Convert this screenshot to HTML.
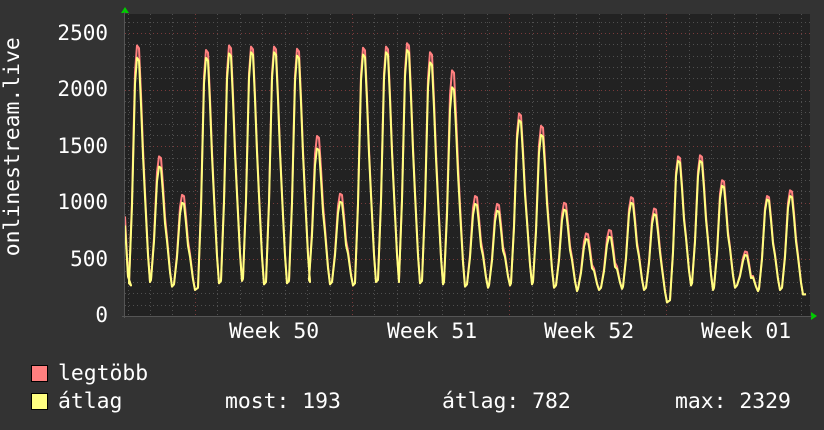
<!DOCTYPE html>
<html><head><meta charset="utf-8"><style>
html,body{margin:0;padding:0;background:#333;}
body{width:824px;height:430px;overflow:hidden;position:relative;font-family:"DejaVu Sans Mono","Liberation Mono",monospace;color:#fff;}
.t{position:absolute;font-size:21.4px;line-height:1;white-space:pre;}
.yl{position:absolute;right:716px;font-size:21px;line-height:1;}
.sq{position:absolute;width:15px;height:15px;border:1px solid #000;}
</style></head><body>
<svg id="g" width="824" height="430" style="position:absolute;left:0;top:0">
<rect x="125" y="14" width="685" height="302" fill="#222"/>
<g id="grid"></g>
<path id="mx" fill="none" stroke="#ff7f7f" stroke-width="2" stroke-linejoin="round"/>
<path id="av" fill="none" stroke="#ffff80" stroke-width="2" stroke-linejoin="round"/>
<polygon points="121,13 125,7 129,13" fill="#0c0"/>
<polygon points="811,312 817,316 811,320" fill="#0c0"/>
<line x1="124.5" y1="12" x2="124.5" y2="318" stroke="#555" stroke-width="1"/>
<line x1="122" y1="316.5" x2="812" y2="316.5" stroke="#555" stroke-width="1"/>
</svg>
<div class="yl" style="top:23px">2500</div>
<div class="yl" style="top:79px">2000</div>
<div class="yl" style="top:136px">1500</div>
<div class="yl" style="top:192px">1000</div>
<div class="yl" style="top:249px">500</div>
<div class="yl" style="top:305px">0</div>
<div class="t" style="left:-80px;top:153px;transform:rotate(-90deg);width:185px;text-align:center">onlinestream.live</div>
<div class="t" style="left:229px;top:321px">Week 50</div>
<div class="t" style="left:387px;top:321px">Week 51</div>
<div class="t" style="left:544px;top:321px">Week 52</div>
<div class="t" style="left:701px;top:321px">Week 01</div>
<div class="sq" style="left:31px;top:365px;background:#ff7f7f"></div>
<div class="sq" style="left:31px;top:393px;background:#ffff80"></div>
<div class="t" style="left:58px;top:363px">legtöbb</div>
<div class="t" style="left:58px;top:391px">átlag</div>
<div class="t" style="left:225px;top:391px">most: 193</div>
<div class="t" style="left:442px;top:391px">átlag: 782</div>
<div class="t" style="left:675px;top:391px">max: 2329</div>
<script>
var ns="http://www.w3.org/2000/svg",G=document.getElementById('grid');
function ln(x1,y1,x2,y2,c){var l=document.createElementNS(ns,'line');l.setAttribute('x1',x1);l.setAttribute('y1',y1);l.setAttribute('x2',x2);l.setAttribute('y2',y2);l.setAttribute('stroke',c);l.setAttribute('stroke-dasharray','1,3');l.setAttribute('stroke-width','1');G.appendChild(l);}
function Y(v){return 316-v*0.1132;}
for(var v=100;v<=2600;v+=100){var y=Math.round(Y(v))+0.5;if(y<14)break;ln(125,y,810,y,v%500==0?'#7a3a3a':'#505050');}
for(var x=127.5;x<810;x+=22.45){var xx=Math.round(x)+0.5;ln(xx,14,xx,316,'#505050');}
[195,352,509,666].forEach(function(x){ln(x+0.5,14,x+0.5,316,'#7a3a3a');});
var pk=[[138,2390,2280],[160,1410,1320],[183,1070,1000],[207,2350,2280],[230,2390,2320],[252,2380,2330],[275,2380,2330],[298,2360,2300],[318,1590,1480],[341,1080,1010],[364,2370,2310],[387,2380,2330],[408,2410,2350],[431,2330,2240],[453,2170,2020],[476,1060,990],[498,990,930],[520,1790,1730],[542,1680,1600],[565,1000,940],[587,730,680],[610,760,700],[632,1050,1000],[655,950,900],[679,1410,1370],[701,1420,1370],[723,1200,1150],[746,570,540],[768,1060,1030],[791,1110,1060]];
var tr=[270,300,260,230,290,310,280,290,300,280,270,300,300,290,280,260,250,270,280,250,220,230,240,230,120,270,230,250,220,230,190];
function build(k){var pts=[[125,k==1?880:800],[128,350],[131,tr[0]]];
for(var i=0;i<pk.length;i++){var p=pk[i][0],P=pk[i][k],T=tr[i],T2=tr[i+1];
pts.push([p-9,T+20],[p-6,T+(P-T)*0.35],[p-3,P*0.9],[p-1,P],[p+1,P*0.99],[p+3,P*0.82],[p+5,P*0.62],[p+7,T2+(P-T2)*0.38],[p+10,T2+(P-T2)*0.12],[p+12,T2]);}
pts.push([806,193]);
var d='';pts.forEach(function(q,i){d+=(i?'L':'M')+q[0].toFixed(1)+','+Y(q[1]).toFixed(1);});return d;}
document.getElementById('mx').setAttribute('d',build(1));
document.getElementById('av').setAttribute('d',build(2));
</script>
</body></html>
